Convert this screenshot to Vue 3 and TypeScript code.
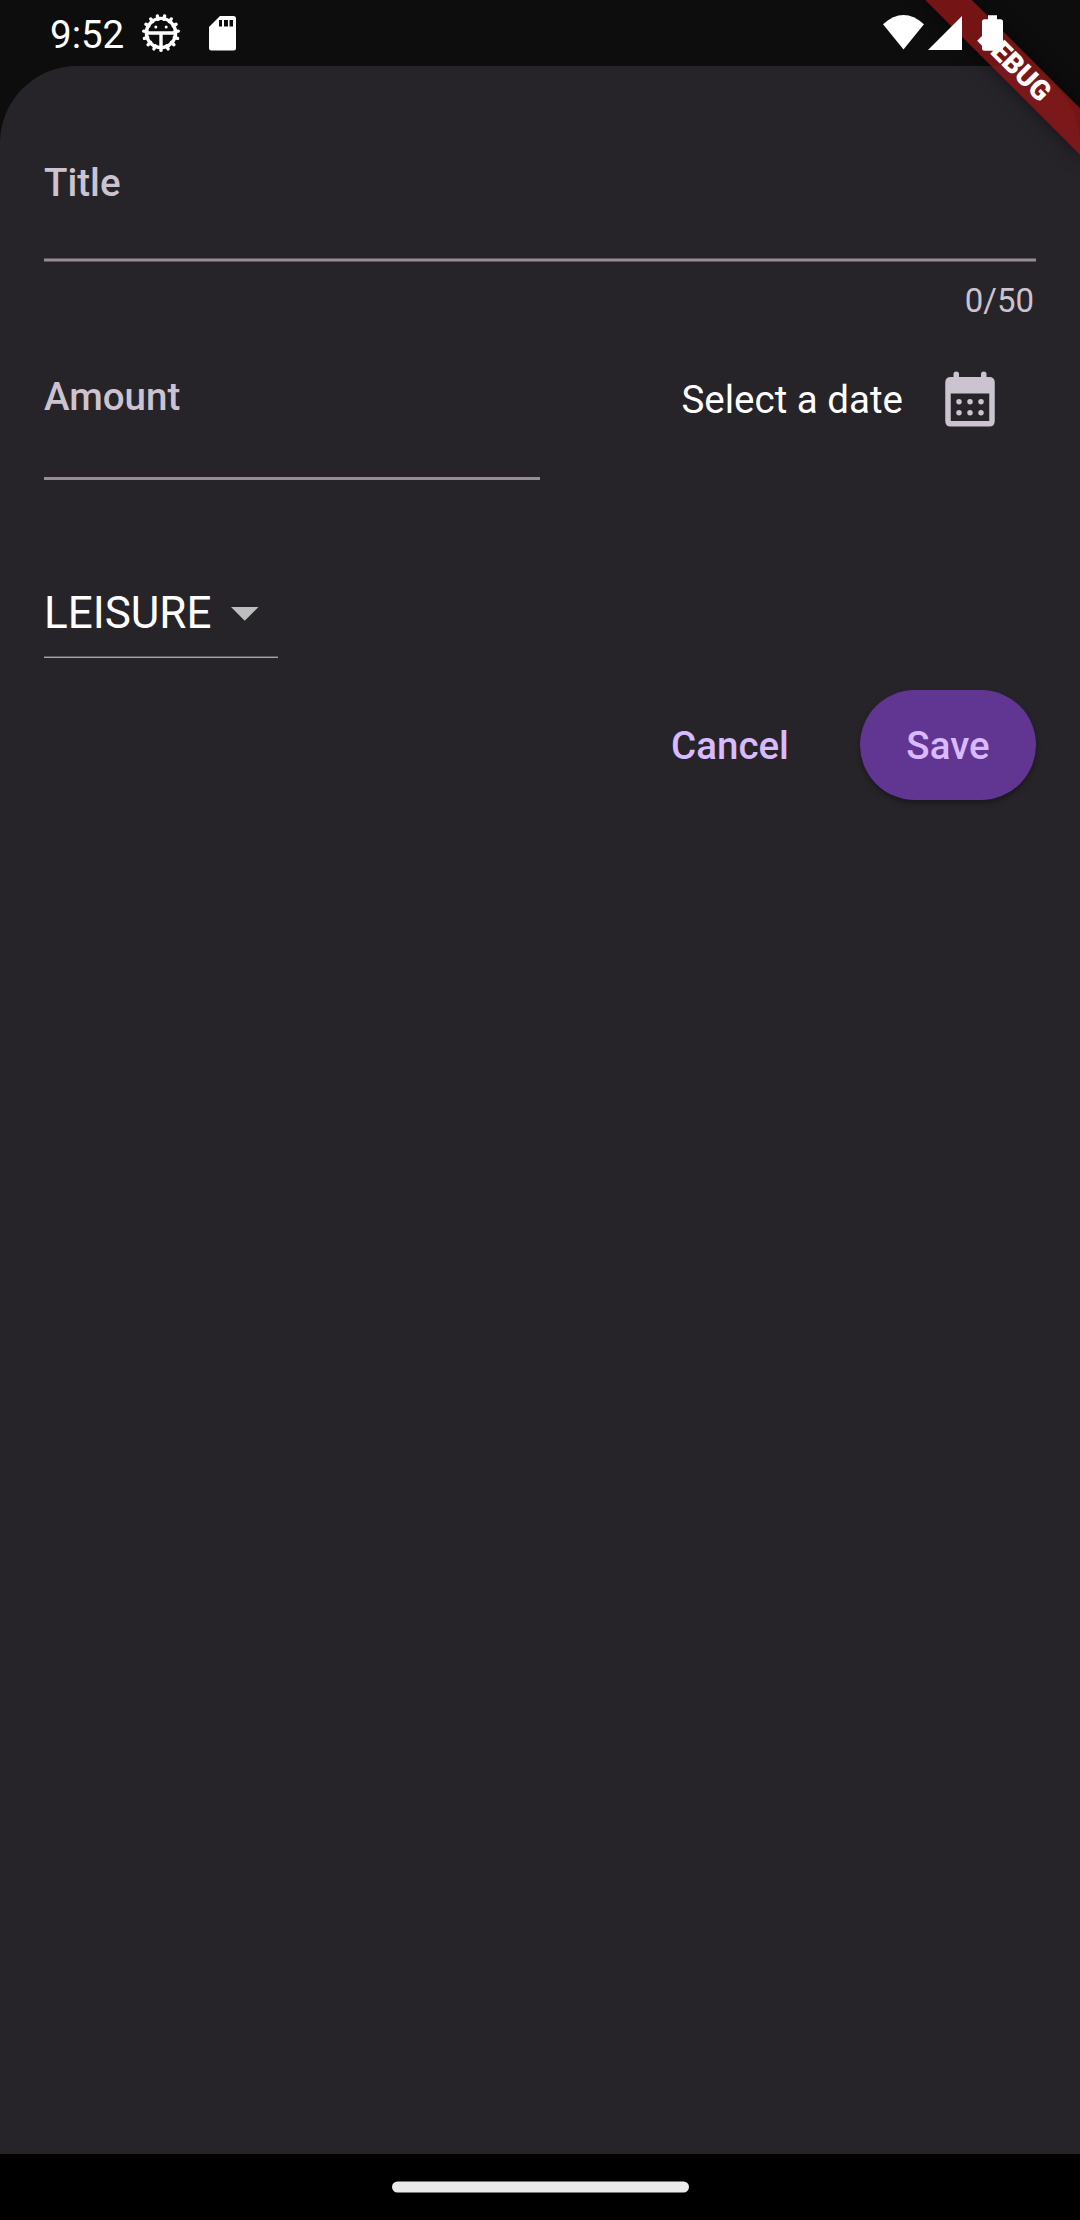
<script setup lang="ts">
import { computed, ref } from 'vue'

const title = ref('')
const maxLength = 50
const category = ref('LEISURE')
const counter = computed(() => `${title.value.length}/${maxLength}`)
const teeth = Array.from({ length: 15 }, (_, i) => i * 24 + 180)
const dots = [13, 17].flatMap((y) => [8, 12, 16].map((x) => ({ x, y })))
</script>

<template>
  <div class="screen">
    <header class="status">
      <span class="clock">9:52</span>
      <svg class="gear" width="40" height="40" viewBox="-20 -20 40 40">
        <g stroke="#fff" stroke-width="3.4" stroke-linecap="round">
          <line v-for="a in teeth" :key="a" x1="0" y1="-14" x2="0" y2="-17.4" :transform="`rotate(${a})`" />
        </g>
        <circle r="14.6" fill="none" stroke="#fff" stroke-width="3.4" />
        <path d="M-13 0H13M0 0V14" stroke="#fff" stroke-width="3.4" />
        <circle cx="-5.2" cy="-6" r="1.5" fill="#fff" />
        <circle cx="5.2" cy="-6" r="1.5" fill="#fff" />
      </svg>
      <svg class="sd" width="27" height="35" viewBox="0 0 27 35">
        <path d="M11 0H24.5Q27 0 27 2.5V32Q27 34.5 24.5 34.5H2.5Q0 34.5 0 32V11Z" fill="#fff" />
        <path d="M10 4h3v6.5h-3zM15 4h4v6.5h-4zM20.500 4h3.500v6.5h-3.500z" fill="#0d0d0e" />
      </svg>
      <span class="grow"></span>
      <svg class="signals" width="122" height="38" viewBox="881 14 122 38">
        <path d="M883 24.3Q903.5 5.900 924 24.300L903.500 49.500Z" fill="#fff" />
        <path d="M962 16V50H928Z" fill="#fff" />
        <path d="M988 15.200h9v4h3.500q2.500 0 2.500 2.500v26.500q0 2.500-2.500 2.500h-16q-2.500 0-2.500-2.500V21.700q0-2.500 2.500-2.500h3.500z" fill="#fff" />
      </svg>
    </header>

    <main class="sheet">
      <label class="field">Title</label>
      <div class="rule soft"></div>
      <div class="counter">{{ counter }}</div>

      <div class="row">
        <div class="amount">
          <label class="field">Amount</label>
          <div class="rule solid"></div>
        </div>
        <div class="date">
          <span class="date-text">Select a date</span>
          <svg class="calendar" width="66" height="66" viewBox="0 0 24 24">
            <path
              fill="#cbc3cf"
              fill-rule="evenodd"
              d="M19 4H18V3Q18 2 17 2T16 3V4H8V3Q8 2 7 2T6 3V4H5Q3 4 3 6V20Q3 22 5 22H19Q21 22 21 20V6Q21 4 19 4ZM5 10H19V20H5Z"
            />
            <circle v-for="d in dots" :key="`${d.x}-${d.y}`" :cx="d.x" :cy="d.y" r="1" fill="#cbc3cf" />
          </svg>
        </div>
      </div>

      <div class="select">
        <span>{{ category }}</span>
        <svg class="caret" width="28" height="14" viewBox="0 0 28 14"><path d="M0 0H27.500L13.750 13.750Z" fill="#bebdbf" /></svg>
      </div>

      <div class="actions">
        <button class="cancel">Cancel</button>
        <button class="save">Save</button>
      </div>
    </main>

    <footer class="nav">
      <svg class="handle" width="297" height="12"><rect y="0.5" width="297" height="11" rx="5.5" fill="#ebebeb" /></svg>
    </footer>

    <div class="banner-clip"><div class="banner"><span>DEBUG</span></div></div>
  </div>
</template>

<style>
body {
  background: #000;
}
</style>

<style scoped>
.screen {
  position: relative;
  display: flex;
  flex-direction: column;
  width: 1080px;
  height: 2220px;
  overflow: hidden;
  background: linear-gradient(#0d0d0e 0 200px, #000 200px);
  font-family: Roboto, sans-serif;
  color: #fff;
}
.status {
  position: relative;
  z-index: 3;
  display: flex;
  align-items: flex-start;
  height: 66px;
}
.clock {
  width: 75px;
  margin: 12px 0 0 50px;
  font-size: 38.5px;
  line-height: 46px;
  white-space: nowrap;
}
.gear {
  margin: 13px 0 0 16px;
}
.sd {
  margin: 16px 0 0 28px;
}
.grow {
  flex: 1;
}
.signals {
  margin: 14px 77px 0 0;
}
.sheet {
  display: flex;
  flex-direction: column;
  box-sizing: border-box;
  height: 2088px;
  padding: 94px 44px 0;
  border-radius: 77px 77px 0 0;
  background: #262429;
}
.field {
  display: block;
  font-size: 38.5px;
  line-height: 46px;
  font-weight: 500;
  color: #cbc3cf;
}
.rule.soft {
  height: 4px;
  margin-top: 52px;
  background: linear-gradient(#5f5861 0 1px, #968d98 1px 3px, #5f5861 3px);
}
.counter {
  margin-top: 19px;
  padding-right: 2px;
  text-align: right;
  font-size: 33px;
  line-height: 40px;
  color: #cbc3cf;
}
.row {
  display: flex;
  justify-content: space-between;
  margin-top: 53px;
}
.amount {
  width: 496px;
}
.rule.solid {
  height: 3px;
  margin-top: 57px;
  background: #968d98;
}
.date {
  display: flex;
  align-items: center;
  height: 66px;
  margin-top: -8px;
  padding-right: 33px;
}
.date-text {
  padding-top: 2px;
  font-size: 38.5px;
  line-height: 46px;
}
.calendar {
  margin-left: 34px;
}
.select {
  display: flex;
  align-items: center;
  justify-content: space-between;
  box-sizing: border-box;
  width: 234px;
  height: 90px;
  margin-top: 88px;
  padding-right: 19px;
  background: linear-gradient(#5d5b5f 0 1px, #a5a4a7 1px) bottom / 100% 2px no-repeat;
  font-size: 44px;
  line-height: 52px;
}
.caret {
  margin-top: 2px;
}
.actions {
  display: flex;
  justify-content: flex-end;
  margin-top: 32px;
}
button {
  height: 110px;
  padding: 2px 0 0;
  border: 0;
  border-radius: 55px;
  font: 500 38.5px/46px Roboto, sans-serif;
  color: #d9b9ff;
}
.cancel {
  width: 184px;
  margin-right: 38px;
  background: none;
}
.save {
  width: 176px;
  background: #613592;
  box-shadow: 0 3px 5px rgba(0, 0, 0, 0.35);
}
.nav {
  display: flex;
  align-items: flex-start;
  justify-content: center;
  height: 66px;
  background: #000;
}
.handle {
  margin-top: 27px;
}
.banner-clip {
  position: absolute;
  z-index: 2;
  top: 0;
  right: 0;
  width: 260px;
  height: 260px;
  overflow: hidden;
}
.banner {
  position: absolute;
  top: 49.2px;
  right: -44.3px;
  width: 220px;
  height: 33px;
  transform: rotate(45deg);
  background: linear-gradient(rgba(183, 28, 28, 0.627), rgba(183, 28, 28, 0.627)), rgba(0, 0, 0, 0.45);
  box-shadow: 0 0 19px rgba(0, 0, 0, 0.5);
  text-align: center;
  font-size: 28px;
  font-weight: 900;
  line-height: 31.5px;
}
</style>
